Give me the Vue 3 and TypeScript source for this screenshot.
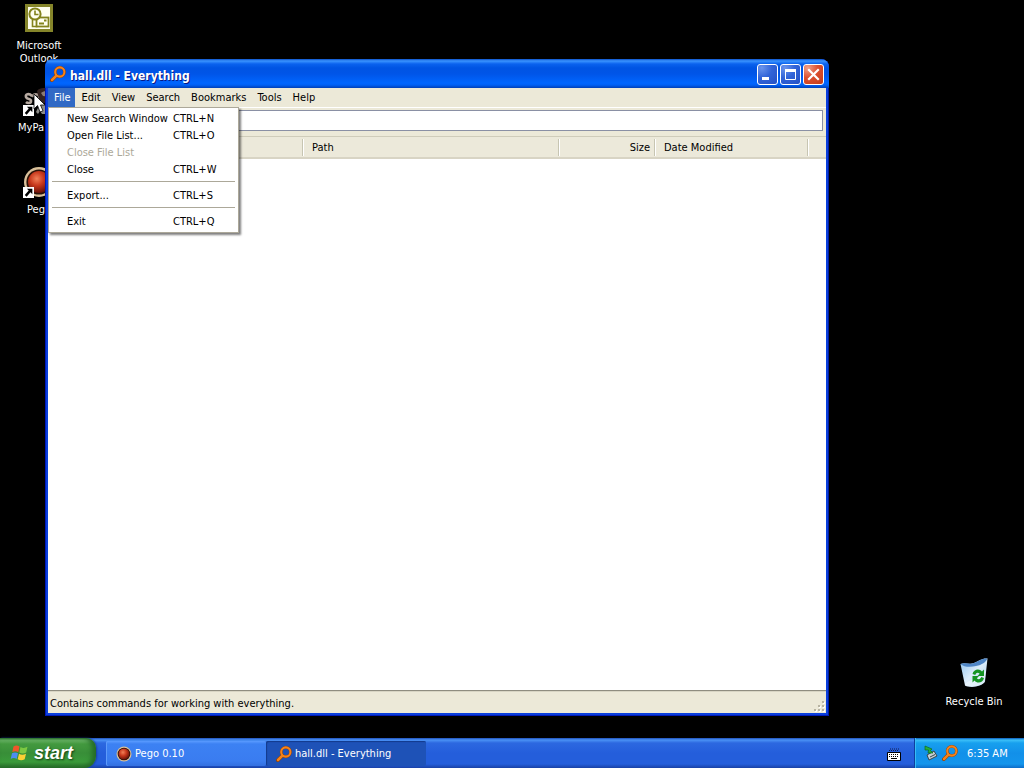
<script setup lang="ts">
import { ref } from 'vue'

interface MenuRow {
  label?: string
  keys?: string
  disabled?: boolean
  separator?: boolean
}

const menus: string[] = ['File', 'Edit', 'View', 'Search', 'Bookmarks', 'Tools', 'Help']
const openMenu = ref('File')
const query = ref('')

const fileRows: MenuRow[] = [
  { label: 'New Search Window', keys: 'CTRL+N' },
  { label: 'Open File List...', keys: 'CTRL+O' },
  { label: 'Close File List', disabled: true },
  { label: 'Close', keys: 'CTRL+W' },
  { separator: true },
  { label: 'Export...', keys: 'CTRL+S' },
  { separator: true },
  { label: 'Exit', keys: 'CTRL+Q' },
]
</script>

<template>
  <div class="desktop">
    <svg class="defs" width="0" height="0" aria-hidden="true">
      <defs>
        <radialGradient id="ball" cx="0.4" cy="0.35" r="0.7">
          <stop offset="0" stop-color="#f08058" />
          <stop offset="0.45" stop-color="#c8381c" />
          <stop offset="1" stop-color="#5c0d05" />
        </radialGradient>
        <linearGradient id="bin" x1="0" y1="0" x2="1" y2="1">
          <stop offset="0" stop-color="#8fc3ee" />
          <stop offset="0.5" stop-color="#dcedfa" />
          <stop offset="1" stop-color="#a9cdea" />
        </linearGradient>
        <symbol id="magnifier" viewBox="0 0 16 16">
          <path d="M6.2 9.8 1.8 14.2" stroke="#8a3d00" stroke-width="3.6" stroke-linecap="round" />
          <circle cx="9.8" cy="6" r="4.6" fill="none" stroke="#8a3d00" stroke-width="2.8" />
          <path d="M6.4 9.6 2 14" stroke="#f5821c" stroke-width="2.6" stroke-linecap="round" />
          <circle cx="9.8" cy="6" r="4.6" fill="none" stroke="#f5821c" stroke-width="2.1" />
        </symbol>
        <symbol id="pego" viewBox="0 0 32 32">
          <circle cx="16" cy="16" r="15" fill="#d9c09a" />
          <circle cx="16" cy="16" r="12.6" fill="#2c1208" />
          <circle cx="16" cy="16" r="11" fill="url(#ball)" />
        </symbol>
        <symbol id="shortcut" viewBox="0 0 10 10">
          <rect width="10" height="10" fill="#fff" />
          <path d="M3.5 1.5H8.5V6.5L6.800 4.800 3.300 8.800 1.600 7.200 5.200 3.200Z" fill="#000" />
        </symbol>
      </defs>
    </svg>

    <main class="surface">
      <a href="#outlook" class="icon outlook">
        <svg width="32" height="32" viewBox="0 0 32 32" aria-hidden="true">
          <rect x="2" y="2" width="28" height="28" fill="#85852a" />
          <rect x="5" y="5" width="22" height="22" fill="#fffff0" />
          <path d="M9.500 18v6.500h5" fill="none" stroke="#83831c" stroke-width="1.600" />
          <rect x="13.500" y="15.500" width="12" height="9" fill="#fffff0" stroke="#83831c" stroke-width="1.800" />
          <path d="M16 21.500h5M21 18.500h2.500" fill="none" stroke="#83831c" stroke-width="1.800" />
          <circle cx="12" cy="12" r="5.600" fill="#fffff0" stroke="#83831c" stroke-width="2" />
          <path d="M12 8.500v4h3.500" fill="none" stroke="#83831c" stroke-width="1.600" />
        </svg>
        <span>Microsoft Outlook</span>
      </a>
      <a href="#mypaint" class="icon mypa">
        <svg width="32" height="32" viewBox="0 0 32 32" aria-hidden="true">
          <path d="M9 12c-3-3-7-2-6 1s5 1 5 4-4 2-5 1" fill="none" stroke="#b8aba2" stroke-width="2.600" />
          <path d="M9 13c2-4 6-3 7-1s-2 5-5 5" fill="none" stroke="#a89a92" stroke-width="2.400" />
          <path d="M14 7c4-5 13-3 15 2v10H17z" fill="#33221f" />
          <path d="M18 9c3-3 8-2 10 1v3l-8-1z" fill="#8d7c74" />
          <path d="M13 28c2-5 4-8 7-9l3 3v8h-4l-2-3-2 3z" fill="#8d8c88" />
          <use href="#shortcut" x="0" y="21" width="11" height="11" />
        </svg>
        <span>MyPa</span>
      </a>
      <a href="#pego" class="icon pego">
        <svg width="32" height="32" viewBox="0 0 32 32" aria-hidden="true">
          <use href="#pego" width="32" height="32" />
          <use href="#shortcut" x="0" y="21" width="11" height="11" />
        </svg>
        <span>Pego</span>
      </a>
      <a href="#recycle" class="icon recycle">
        <svg width="32" height="32" viewBox="0 0 32 32" aria-hidden="true">
          <path d="M2.500 6C7 4 11 7 16 5s8-5 13.500-4.500l-2.500 23c-3 5-14 7-20 4z" fill="url(#bin)" />
          <path d="M2.500 6C8 4 11 7 16 5s8-5 13.500-4.500C28 4 24 7 18 8 12 9.500 6 9 2.500 6z" fill="#4f86c6" />
          <path d="M7 26c6-6 14-4 21-14l-1.300 12c-3 4-14 6-19.500 3.500z" fill="#f4faff" opacity="0.6" />
          <path d="M14.500 16c1-5 7-6 9.500-2.500l2-2V18h-6.500l2.200-2.200c-1.600-1.600-3.600-1.200-4.400 1.200z" fill="#159422" />
          <path d="M26 20c-1 5-7 6-9.500 2.500l-2 2V18H21l-2.200 2.200c1.600 1.600 3.600 1.200 4.400-1.200z" fill="#159422" />
        </svg>
        <span>Recycle Bin</span>
      </a>

      <section class="window" aria-label="Everything">
        <header class="titlebar">
          <svg width="16" height="16" aria-hidden="true"><use href="#magnifier" width="16" height="16" /></svg>
          <h1>hall.dll - Everything</h1>
          <div class="controls">
            <button type="button" aria-label="Minimize">
              <svg width="19" height="19" viewBox="0 0 19 19"><rect x="4" y="12" width="7" height="3" fill="#fff" /></svg>
            </button>
            <button type="button" aria-label="Maximize">
              <svg width="19" height="19" viewBox="0 0 19 19">
                <path d="M4.500 5v9.500h10V5" fill="none" stroke="#fff" /><rect x="4" y="4" width="11" height="3" fill="#fff" />
              </svg>
            </button>
            <button type="button" class="close" aria-label="Close window">
              <svg width="19" height="19" viewBox="0 0 19 19"><path d="M5 5l9 9M14 5l-9 9" stroke="#fff" stroke-width="2.200" stroke-linecap="square" /></svg>
            </button>
          </div>
        </header>

        <div class="client">
          <nav class="menubar">
            <div v-for="m in menus" :key="m" class="menu">
              <button type="button" :class="{ open: m === openMenu }" @click="openMenu = openMenu === m ? '' : m">{{ m }}</button>
              <div v-if="m === 'File' && openMenu === m" class="popup" role="menu">
                <template v-for="(row, i) in fileRows" :key="i">
                  <hr v-if="row.separator" />
                  <button v-else type="button" role="menuitem" :disabled="row.disabled">
                    <span>{{ row.label }}</span><span>{{ row.keys }}</span>
                  </button>
                </template>
              </div>
            </div>
          </nav>
          <div class="searchbar"><input v-model="query" type="text" aria-label="Search" /></div>
          <div class="results">
            <table>
              <colgroup><col class="c-name" /><col /><col class="c-size" /><col class="c-date" /><col class="c-rest" /></colgroup>
              <thead>
                <tr><th></th><th>Path</th><th class="num">Size</th><th>Date Modified</th><th></th></tr>
              </thead>
            </table>
          </div>
          <footer class="status">
            <span>Contains commands for working with everything.</span>
            <svg width="12" height="12" viewBox="0 0 12 12" aria-hidden="true">
              <path d="M9 1h2v2H9zM9 5h2v2H9zM5 5h2v2H5zM9 9h2v2H9zM5 9h2v2H5zM1 9h2v2H1z" fill="#fff" />
              <path d="M8 0h2v2H8zM8 4h2v2H8zM4 4h2v2H4zM8 8h2v2H8zM4 8h2v2H4zM0 8h2v2H0z" fill="#b8b4a2" />
            </svg>
          </footer>
        </div>
      </section>

      <svg class="cursor" width="14" height="21" viewBox="0 0 14 21" aria-hidden="true">
        <path d="M1 1v15l3.500-3.500L7 19l3-1.200L7.500 12H12z" fill="#fff" stroke="#000" stroke-width="0.8" />
      </svg>
    </main>

    <footer class="taskbar">
      <button type="button" class="start">
        <svg width="20" height="20" viewBox="0 0 20 20" aria-hidden="true">
          <path d="M3.500 3.500c2-1.300 4-1.300 6 0L8.300 9.200c-2-1.200-4-1.200-6 0z" fill="#f0562a" />
          <path d="M10.500 4c2 1.200 4.500 1.200 7-.2l-1.300 5.700c-2.300 1.400-4.800 1.300-6.900.1z" fill="#7cc842" />
          <path d="M2 10.300c2-1.200 4-1.200 6 0l-1.300 5.600c-2-1.200-4-1.200-6 0z" fill="#4d8df0" />
          <path d="M9 10.700c2 1.200 4.500 1.300 7 0l-1.300 5.600c-2.400 1.300-4.900 1.200-7 0z" fill="#fbd035" />
        </svg>
        <span>start</span>
      </button>
      <div class="tasks">
        <button type="button" class="task">
          <svg width="16" height="16" aria-hidden="true"><use href="#pego" width="16" height="16" /></svg>
          <span>Pego 0.10</span>
        </button>
        <button type="button" class="task active">
          <svg width="16" height="16" aria-hidden="true"><use href="#magnifier" width="16" height="16" /></svg>
          <span>hall.dll - Everything</span>
        </button>
      </div>
      <button type="button" class="keyboard" aria-label="Keyboard">
        <svg width="14" height="13" viewBox="0 0 14 13">
          <path d="M2 2.500h9M3 1h9" stroke="#101c50" stroke-dasharray="1 1" />
          <rect x="0" y="4" width="14" height="9" rx="1" fill="#000" />
          <rect x="1" y="5" width="12" height="7" fill="#fff" />
          <path d="M2 6.500h10M2 8.500h10" stroke="#000" stroke-dasharray="1 1" />
          <path d="M4 10.500h6" stroke="#000" />
        </svg>
      </button>
      <div class="tray">
        <svg width="16" height="16" viewBox="0 0 16 16" aria-hidden="true">
          <path d="M4 10l7-4 3 5-8 4z" fill="#c6d0d6" stroke="#39464e" />
          <path d="M7 12l5-2.500" stroke="#39464e" />
          <path d="M2 1l7 3-1.500 1.500L10 8H5l.5-3L2 5z" fill="#25b03a" stroke="#0d6a22" stroke-width="0.700" />
        </svg>
        <svg width="16" height="16" aria-hidden="true"><use href="#magnifier" width="16" height="16" /></svg>
        <time>6:35 AM</time>
      </div>
    </footer>
  </div>
</template>

<style>
body {
  margin: 0;
  background: #000;
}
</style>

<style scoped>
.desktop {
  display: flex;
  flex-direction: column;
  height: 100vh;
  overflow: hidden;
  background: #000;
  color: #000;
  font: 11px/13px Tahoma, "DejaVu Sans Condensed", "DejaVu Sans", sans-serif;
}
.defs { position: absolute; }
button {
  padding: 0;
  border: 0;
  background: none;
  color: inherit;
  font: inherit;
}
svg { display: block; flex: none; }
.surface { position: relative; flex: 1; }
.icon {
  position: absolute;
  display: flex;
  flex-direction: column;
  align-items: center;
  gap: 5px;
  width: 74px;
  color: #fff;
  text-align: center;
  text-decoration: none;
}
.outlook { left: 2px; top: 2px; }
.mypa { left: 2px; top: 84px; }
.mypa span { margin-right: 16px; }
.pego { left: 2px; top: 166px; }
.recycle { right: 13px; top: 658px; }

.window {
  position: absolute;
  inset: 59px 195px 22px 45px;
  display: flex;
  flex-direction: column;
  padding: 0 3px 3px;
  border-radius: 8px 8px 0 0;
  background: #0a3fdc;
  box-shadow: inset 1px -1px #0019b8, inset -1px 0 #0019a0;
}
.titlebar {
  display: flex;
  align-items: center;
  gap: 4px;
  height: 29px;
  margin: 0 -3px;
  padding: 0 5px;
  border-radius: 8px 8px 0 0;
  background: linear-gradient(#0a50c8, #3a94ff 2px, #0a62ee 5px, #0054e3 9px, #0055e8 15px, #0066ff 24px, #0060f5 26px, #0040b8);
}
.titlebar h1 {
  flex: 1;
  margin: 0;
  padding-top: 4px;
  color: #fff;
  font: bold 12px/16px "Trebuchet MS", "DejaVu Sans Condensed", sans-serif;
  text-shadow: 1px 1px #0a1883;
}
.controls { display: flex; gap: 2px; padding-top: 2px; }
.controls button {
  width: 21px;
  height: 21px;
  border: 1px solid #fff;
  border-radius: 3px;
  background: radial-gradient(circle at 20% 15%, #6a94ec, #3264d8 45%, #2350c4);
}
.controls .close { background: radial-gradient(circle at 20% 15%, #f0a088, #dc5030 45%, #c23a18); }

.client {
  display: flex;
  flex: 1;
  flex-direction: column;
  background: #ece9d8;
}
.menubar { display: flex; height: 19px; }
.menu { position: relative; }
.menu > button { height: 19px; padding: 0 5px 0 6px; }
.menu > button.open { background: #316ac5; color: #fff; }
.popup {
  position: absolute;
  z-index: 2;
  top: 19px;
  left: 0;
  width: 185px;
  padding: 2px;
  border: 1px solid #aca899;
  background: #fff;
  box-shadow: 2px 2px 2px rgba(0, 0, 0, 0.5);
}
.popup button {
  display: grid;
  grid-template-columns: 106px 1fr;
  width: 100%;
  height: 17px;
  padding-left: 16px;
  align-items: center;
  text-align: left;
  white-space: nowrap;
}
.popup button:disabled { color: #aca899; }
.popup hr {
  height: 1px;
  margin: 3px 1px 5px;
  border: 0;
  background: #aca899;
}
.searchbar { padding: 2px 3px 5px; border-top: 1px solid #fff; }
.searchbar input {
  display: block;
  box-sizing: border-box;
  width: 100%;
  height: 21px;
  padding: 0 4px;
  border: 1px solid #8a90a4;
  background: #fff;
  font: inherit;
  outline: 0;
}
.results { flex: 1; background: #fff; }
table {
  width: 100%;
  border-collapse: separate;
  border-spacing: 0;
  table-layout: fixed;
}
.c-name { width: 256px; }
.c-size { width: 96px; }
.c-date { width: 153px; }
.c-rest { width: 17px; }
th {
  position: relative;
  height: 20px;
  padding: 0 8px;
  border-top: 1px solid #cfccba;
  border-bottom: 2px solid #d8d4c4;
  background: #ece9da;
  font-weight: normal;
  text-align: left;
}
th.num { padding-right: 6px; text-align: right; }
th:not(:last-child)::after {
  content: "";
  position: absolute;
  top: 2px;
  right: 0;
  width: 1px;
  height: 17px;
  border-right: 1px solid #fff;
  background: #c7c5b2;
}
.status {
  display: flex;
  align-items: center;
  justify-content: space-between;
  height: 22px;
  padding-left: 2px;
  border-top: 1px solid #8f8d80;
  box-shadow: inset 0 1px #d8d5c4;
}
.status span { padding-top: 2px; }
.status svg { align-self: flex-end; }
.cursor { position: absolute; left: 33px; top: 93px; z-index: 3; }

.taskbar {
  display: flex;
  height: 30px;
  background: linear-gradient(#1f4fb8, #4a92f5 2px, #2c68e0 5px, #245edb 15px, #245edb 26px, #1941a5);
  color: #fff;
}
.start {
  display: flex;
  align-items: center;
  gap: 4px;
  width: 96px;
  padding-left: 10px;
  border-radius: 0 10px 12px 0;
  background: linear-gradient(#2c7030, #6cb868 2px, #43993f 6px, #388e38 15px, #3a9a3a 24px, #256b28);
  box-shadow: inset -4px 0 5px #256b28, 1px 0 2px #1840a0;
}
.start span {
  font: italic bold 18px/24px "Liberation Sans", sans-serif;
  text-shadow: 1px 1px 2px #123d12;
}
.tasks { display: flex; flex: 1; padding: 3px 10px 2px; }
.task {
  display: flex;
  align-items: center;
  gap: 3px;
  width: 160px;
  padding-left: 10px;
  border-radius: 2px;
  background: linear-gradient(#5a9bff, #3c81f3 3px, #3a7cf0 20px, #3370e0);
  box-shadow: inset 1px 0 #5e9bfa;
}
.task.active {
  background: #1e52b7;
  box-shadow: inset 1px 1px 1px #123a8c;
}
.keyboard { display: flex; align-items: center; padding: 2px 13px 0 0; }
.tray {
  display: flex;
  align-items: center;
  gap: 3px;
  box-sizing: border-box;
  width: 110px;
  padding-left: 8px;
  border-left: 1px solid #0e3f9e;
  background: linear-gradient(#0c59b9, #3cc0f8 2px, #17a0ee 5px, #1290e9 15px, #1495ec 26px, #0d6cc8);
  box-shadow: inset 1px 0 #38bdf5;
}
.tray time { margin-left: 6px; }
</style>
